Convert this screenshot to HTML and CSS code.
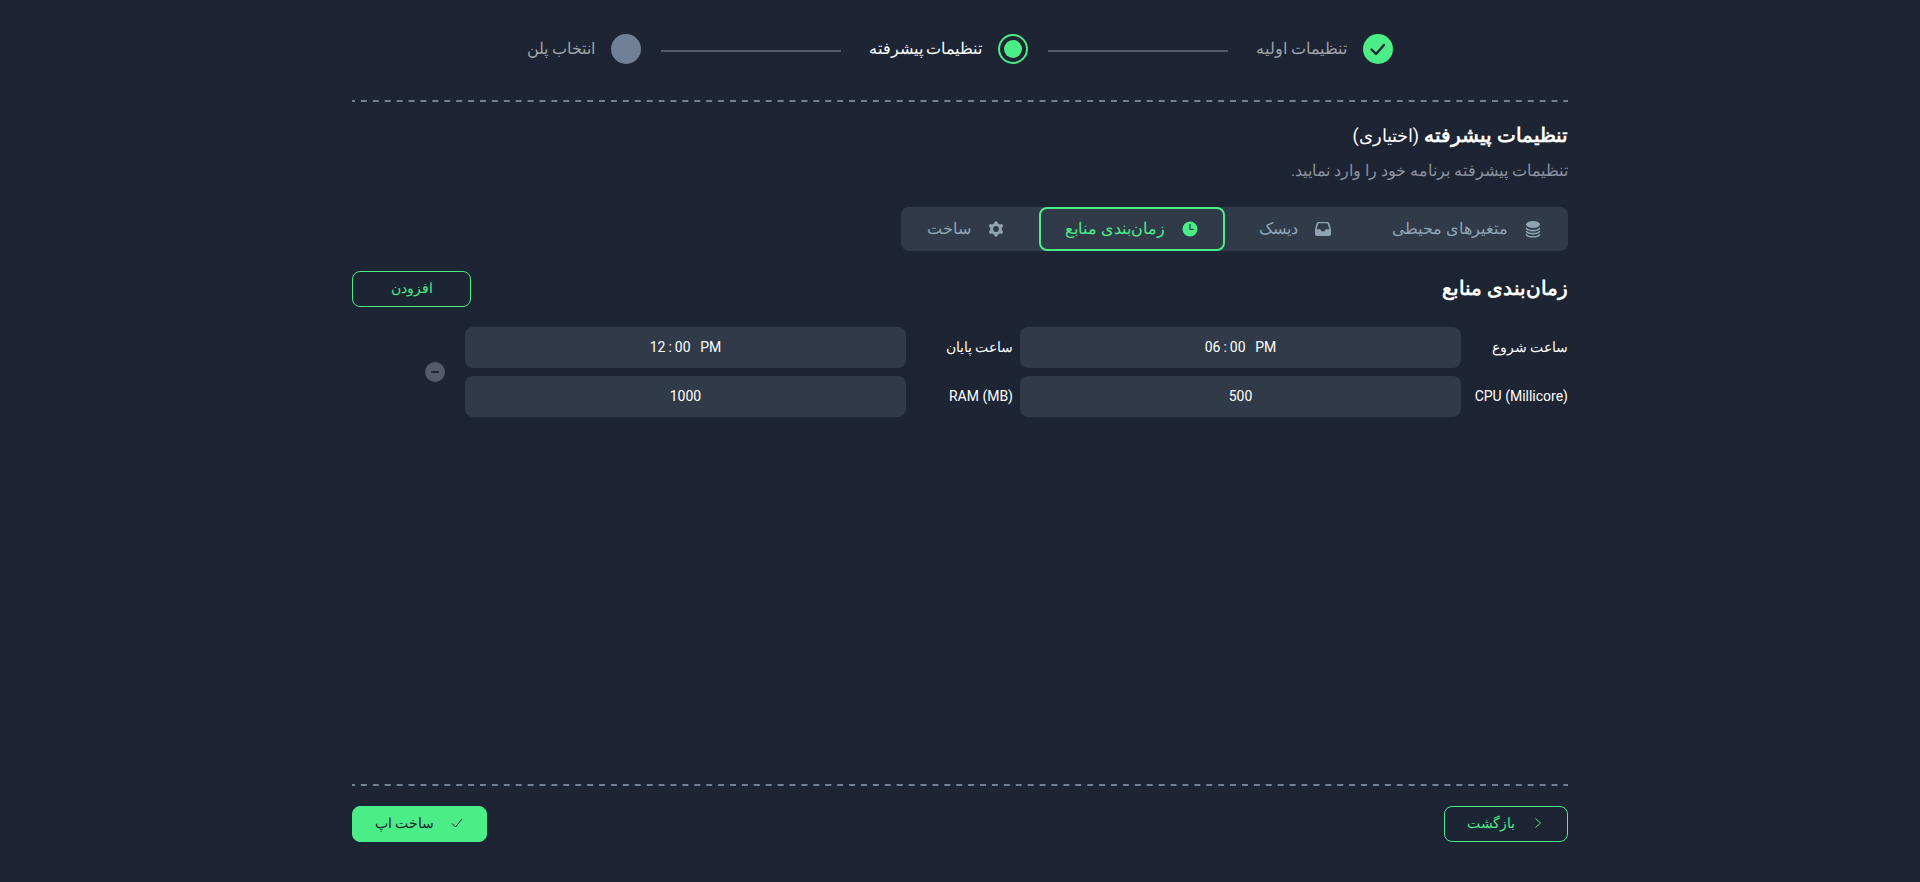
FILE: index.html
```html
<!DOCTYPE html>
<html lang="fa" dir="rtl">
<head>
<meta charset="utf-8">
<meta name="viewport" content="width=device-width, initial-scale=1">
<title>تنظیمات پیشرفته</title>
<link rel="stylesheet" href="styles.css">
</head>
<body>
<main class="wizard">
  <ol class="steps">
    <li class="step">
      <svg class="step-mark" viewBox="0 0 30 30" aria-hidden="true"><circle cx="15" cy="15" r="15" fill="#4aed86"/><path d="M8.500 15.500l4.500 4.500 8-9" fill="none" stroke="#1d2433" stroke-width="2.400" stroke-linecap="round" stroke-linejoin="round"/></svg>
      <span>تنظیمات اولیه</span>
    </li>
    <li class="step-line" aria-hidden="true"></li>
    <li class="step step-current" aria-current="step">
      <svg class="step-mark" viewBox="0 0 30 30" aria-hidden="true"><circle cx="15" cy="15" r="14" fill="none" stroke="#4aed86" stroke-width="2"/><circle cx="15" cy="15" r="9" fill="#4aed86"/></svg>
      <span>تنظیمات پیشرفته</span>
    </li>
    <li class="step-line" aria-hidden="true"></li>
    <li class="step">
      <svg class="step-mark" viewBox="0 0 30 30" aria-hidden="true"><circle cx="15" cy="15" r="15" fill="#718096"/></svg>
      <span>انتخاب پلن</span>
    </li>
  </ol>
  <hr class="divider">
  <header class="intro">
    <h1 class="title">تنظیمات پیشرفته <span class="optional">(اختیاری)</span></h1>
    <p class="lead">تنظیمات پیشرفته برنامه خود را وارد نمایید.</p>
  </header>
  <nav class="tabs">
    <button class="tab" type="button">
      <svg class="tab-icon" viewBox="0 0 18 18" aria-hidden="true"><ellipse cx="9" cy="4.500" rx="7" ry="3.500" fill="currentColor"/><path d="M2.600 8.600c1.500 2.600 11.300 2.600 12.800 0M2.600 11.700c1.500 2.600 11.300 2.600 12.800 0M2.600 14.800c1.500 2.600 11.300 2.600 12.800 0" fill="none" stroke="currentColor" stroke-width="1.700" stroke-linecap="round"/></svg>
      <span>متغیرهای محیطی</span>
    </button>
    <button class="tab" type="button">
      <svg class="tab-icon" viewBox="0 0 18 18" aria-hidden="true"><path fill="currentColor" fill-rule="evenodd" d="M4.200 2h9.600q1 0 1.400 1L17 9v5a2 2 0 0 1-2 2H3a2 2 0 0 1-2-2V9l1.800-6q.4-1 1.400-1zM4.500 3.300 2.500 9.200H6q.6 0 .8.700a2.300 2.300 0 0 0 4.400 0q.2-.7.800-.7h3.500l-2-5.900z"/></svg>
      <span>دیسک</span>
    </button>
    <button class="tab tab-active" type="button" aria-current="true">
      <svg class="tab-icon" viewBox="0 0 18 18" aria-hidden="true"><circle cx="9" cy="9" r="7.500" fill="currentColor"/><path d="M9 4v5.300h3.800" fill="none" stroke="#303a49" stroke-width="1.200"/></svg>
      <span>زمان‌بندی منابع</span>
    </button>
    <button class="tab" type="button">
      <svg class="tab-icon" viewBox="0 0 18 18" aria-hidden="true"><g fill="none" stroke="currentColor"><circle cx="9" cy="9" r="4.400" stroke-width="3"/><path d="M9 4V3M9 14v1M13.300 6.500l.9-.5M4.700 11.500l-.9.500M4.700 6.500 3.800 6M13.300 11.500l.9.500" stroke-width="3.600" stroke-linecap="round"/></g></svg>
      <span>ساخت</span>
    </button>
  </nav>
  <section class="schedule">
    <div class="schedule-head">
      <h2 class="title">زمان‌بندی منابع</h2>
      <button class="button button-outline button-add" type="button">افزودن</button>
    </div>
    <div class="schedule-row">
      <div class="fields">
        <label class="label" for="start">ساعت شروع</label>
        <input class="input" id="start" type="time" value="18:00" dir="ltr">
        <label class="label" for="end">ساعت پایان</label>
        <input class="input" id="end" type="time" value="12:00" dir="ltr">
        <label class="label" for="cpu"><bdi>CPU (Millicore)</bdi></label>
        <input class="input" id="cpu" type="text" inputmode="numeric" value="500" dir="ltr">
        <label class="label" for="ram"><bdi>RAM (MB)</bdi></label>
        <input class="input" id="ram" type="text" inputmode="numeric" value="1000" dir="ltr">
      </div>
      <button class="remove" type="button" aria-label="حذف">
        <svg class="remove-icon" viewBox="0 0 20 20" aria-hidden="true"><circle cx="10" cy="10" r="10" fill="#535b6b"/><path d="M7 10h6" stroke="#1d2433" stroke-width="1.800" stroke-linecap="round"/></svg>
      </button>
    </div>
  </section>
  <footer class="footer">
    <hr class="divider">
    <div class="actions">
      <button class="button button-outline" type="button">
        <svg class="button-icon" viewBox="0 0 14 14" aria-hidden="true"><path d="M4.500 2.500 9.500 7l-5 4.500" fill="none" stroke="currentColor"/></svg>
        <span>بازگشت</span>
      </button>
      <button class="button button-solid" type="button">
        <svg class="button-icon" viewBox="0 0 14 14" aria-hidden="true"><path d="M2 7.500l3.500 3.500L12 3" fill="none" stroke="currentColor"/></svg>
        <span>ساخت اپ</span>
      </button>
    </div>
  </footer>
</main>
</body>
</html>
```
FILE: styles.css
```css
* {
  box-sizing: border-box;
}

body {
  margin: 0;
  background: #1d2433;
  color: #fff;
  font-family: Roboto, sans-serif;
  font-size: 16px;
  line-height: 24px;
}

button,
input {
  font: inherit;
  color: inherit;
}

button {
  cursor: pointer;
}

.wizard {
  display: flex;
  flex-direction: column;
  max-width: 1248px;
  min-height: 100vh;
  margin: 0 auto;
  padding: 34px 16px 40px;
}

.steps {
  display: flex;
  justify-content: center;
  align-items: center;
  margin: 0 0 36px;
  padding: 0;
  list-style: none;
}

.step {
  display: flex;
  align-items: center;
  gap: 16px;
  color: #a0a3a8;
}

.step-current {
  color: #fff;
}

.step-mark {
  width: 30px;
  height: 30px;
}

.step-line {
  width: 180px;
  height: 2px;
  margin-top: 4px;
  margin-inline: 28px 20px;
  background: #535b6b;
}

.divider {
  width: 100%;
  height: 2px;
  margin: 0;
  border: 0;
  background: linear-gradient(90deg, #718096 25%, transparent 25% 75%, #718096 75%) 0 0 / calc(100% / 102) 2px;
}

.intro {
  margin-top: 16px;
}

.title {
  margin: 0;
  font-size: 20px;
  line-height: 34px;
  font-weight: 700;
}

.optional {
  font-size: 18px;
  font-weight: 400;
}

.lead {
  margin: 6px 0 0;
  color: #8b92a1;
}

.tabs {
  display: flex;
  align-self: flex-start;
  gap: 8px;
  margin-top: 24px;
  border-radius: 8px;
  background: #303a49;
}

.tab {
  display: flex;
  align-items: center;
  gap: 16px;
  height: 44px;
  padding: 0 24px;
  border: 2px solid transparent;
  border-radius: 8px;
  background: none;
  color: #90a4b4;
}

.tab-active {
  border-color: #4aed86;
  color: #4aed86;
}

.tab-icon {
  width: 18px;
  height: 18px;
}

.schedule {
  margin-top: 20px;
}

.schedule-head {
  display: flex;
  justify-content: space-between;
  align-items: flex-start;
}

.button {
  display: flex;
  justify-content: center;
  align-items: center;
  gap: 16px;
  height: 36px;
  padding: 0 22px 2px;
  border: 1px solid #4aed86;
  border-radius: 8px;
  font-size: 14px;
}

.button-outline {
  background: none;
  color: #4aed86;
}

.button-solid {
  background: #4aed86;
  color: #1d2433;
}

.button-add {
  width: 119px;
}

.button-icon {
  width: 14px;
  height: 14px;
}

.schedule-row {
  display: flex;
  align-items: center;
  gap: 20px;
  margin-top: 20px;
  padding-left: 73px;
}

.fields {
  display: grid;
  flex: 1;
  grid-template-columns: 100px 1fr 100px 1fr;
  gap: 8px 7px;
  align-items: center;
  font-size: 14px;
}

.label {
  padding-bottom: 2px;
  white-space: nowrap;
}

.input {
  width: 100%;
  height: 41px;
  padding: 0 8px 2px;
  border: 0;
  border-radius: 8px;
  background: #303a49;
  text-align: center;
}

.input::-webkit-calendar-picker-indicator {
  display: none;
}

.input::-webkit-datetime-edit {
  text-align: center;
}

.input::-webkit-datetime-edit-hour-field {
  padding: 0 3px 0 0;
}

.input::-webkit-datetime-edit-minute-field {
  padding: 0 4px 0 3px;
}

.input::-webkit-datetime-edit-ampm-field {
  padding: 0 0 0 4px;
}

.remove {
  display: flex;
  padding: 0;
  border: 0;
  background: none;
}

.remove-icon {
  width: 20px;
  height: 20px;
}

.footer {
  margin-top: auto;
}

.actions {
  display: flex;
  justify-content: space-between;
  margin-top: 20px;
}
```
